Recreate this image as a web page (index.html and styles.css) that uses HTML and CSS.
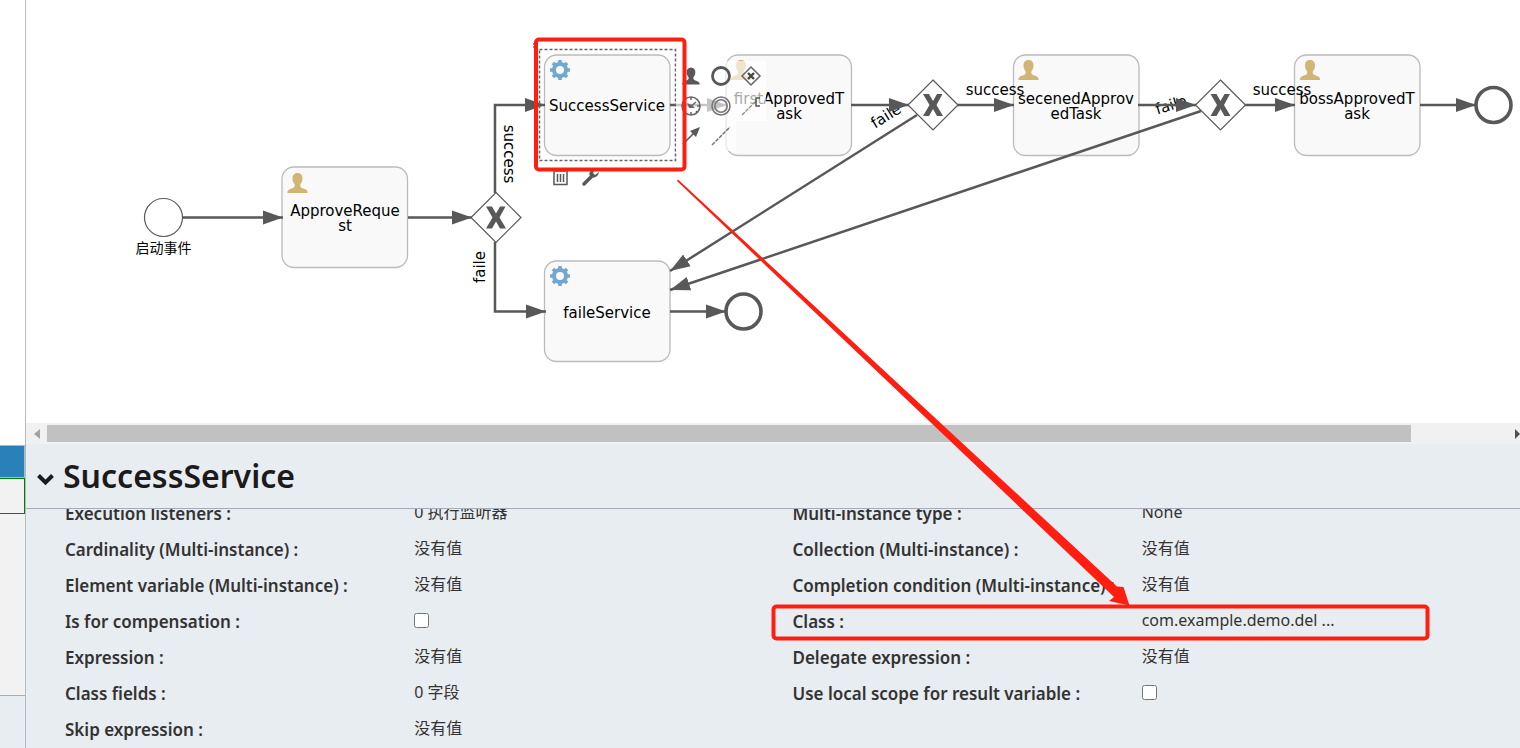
FILE: index.html
```html
<!DOCTYPE html>
<html lang="zh">
<head>
<meta charset="utf-8">
<title>SuccessService</title>
<link rel="stylesheet" href="styles.css">
</head>
<body>
<div class="app">
  <aside class="palette">
    <div class="palette-top"></div>
    <div class="palette-active"></div>
    <div class="palette-selected"></div>
    <div class="palette-rest"></div>
    <div class="palette-foot"></div>
  </aside>
  <main class="editor">
    <section class="canvas">
      <svg class="diagram" width="1494" height="423" viewBox="26 0 1494 423">
        <defs>
          <marker id="arrow" markerUnits="userSpaceOnUse" markerWidth="22" markerHeight="16" refX="20" refY="8" orient="auto"><path d="M0 1 20 8 0 15Z" fill="#585858"/></marker>
          <g id="user"><path d="M0-10C3.500-10 5.200-7.500 5-4.500 4.900-1.500 4-.5 2.800 1.500 2.400 4 3.500 4.700 6 5.500 9 6.500 10.200 7.500 10.200 10H-10.200C-10.200 7.500-9 6.500-6 5.500-3.500 4.700-2.400 4-2.800 1.500-4-.5-4.900-1.500-5-4.500-5.200-7.500-3.500-10 0-10Z"/></g>
          <g id="gear" fill="none" stroke="#72a7d0"><circle r="6" stroke-width="4"/><path stroke-width="3.600" d="M0-6.500V-10M0 6.500V10M-6.500 0H-10M6.500 0H10M-4.700-4.700-7.100-7.100M4.700-4.700 7.100-7.100M-4.700 4.700-7.100 7.100M4.700 4.700 7.100 7.100"/></g>
          <g id="gateway"><path d="M0-25 25 0 0 25-25 0Z" fill="#fff" stroke="#585858" stroke-width="1.200"/><path d="M-10-11H-4L0-4 4-11H9.500L3.500 0 10 11H4L0 4-4 11H-10L-3.500 0Z" fill="#585858"/></g>
          <rect id="task" width="125.500" height="100.500" rx="12"/>
        </defs>
        <g class="tasks">
          <use href="#task" x="282" y="167"/><use href="#task" x="544.500" y="55"/>
          <use href="#task" x="544.500" y="261"/><use href="#task" x="726" y="55"/>
          <use href="#task" x="1013.500" y="55"/><use href="#task" x="1294.500" y="55"/>
        </g>
        <g class="label">
          <text transform="translate(886 116) rotate(-32)" y="5">faile</text>
          <text transform="translate(1171 105) rotate(-17)" y="5">faile</text>
        </g>
        <g class="flow">
          <path d="M183 217.500H283"/><path d="M408 217.500H472"/>
          <path d="M495 193V105H545"/><path d="M495 242V311.500H546"/>
          <path d="M670 311.500H726"/><path d="M670 105H727"/>
          <path d="M851 105H909"/><path d="M957 105H1014"/>
          <path d="M1138 105H1196"/><path d="M1245 105H1295"/><path d="M1420 105H1476"/>
          <path d="M917 115 670 271"/><path d="M1201 111 670 290"/>
        </g>
        <use href="#gateway" x="496" y="217.500"/><use href="#gateway" x="933" y="105"/><use href="#gateway" x="1220.500" y="105"/>
        <circle class="event" cx="163.500" cy="217.500" r="19"/>
        <circle class="event end" cx="743.500" cy="311.500" r="17.500"/>
        <circle class="event end" cx="1493.500" cy="105" r="17.500"/>
        <g fill="#d1b575"><use href="#user" x="297.500" y="183"/><use href="#user" x="741" y="70"/><use href="#user" x="1028.500" y="70"/><use href="#user" x="1310" y="70"/></g>
        <use href="#gear" x="560" y="70"/><use href="#gear" x="560" y="276"/>
        <g class="label">
          <text class="event-name" x="163.500" y="253">启动事件</text>
          <text x="345" y="216">ApproveReque<tspan x="345" dy="15">st</tspan></text>
          <text x="607" y="111">SuccessService</text>
          <text x="607" y="318">faileService</text>
          <text x="789" y="104">firstApprovedT<tspan x="789" dy="15">ask</tspan></text>
          <text x="1076" y="104">secenedApprov<tspan x="1076" dy="15">edTask</tspan></text>
          <text x="1357" y="104">bossApprovedT<tspan x="1357" dy="15">ask</tspan></text>
          <text x="995" y="95">success</text><text x="1282" y="95">success</text>
          <text transform="translate(504 154) rotate(90)">success</text>
          <text transform="translate(485 267) rotate(-90)">faile</text>
        </g>
        <rect class="selection" x="539.500" y="49.500" width="136" height="111"/>
      </svg>
      <div class="context-pad">
        <button aria-label="User task"><svg viewBox="-15 -15 30 30"><use href="#user" transform="scale(.86)" fill="#585858"/></svg></button>
        <button aria-label="End event"><svg viewBox="-15 -15 30 30"><circle r="8.500" fill="none" stroke="#585858" stroke-width="2.800"/></svg></button>
        <button aria-label="Gateway"><svg viewBox="-15 -15 30 30"><path d="M0-9 9 0 0 9-9 0Z" fill="none" stroke="#666" stroke-width="1.500"/><path d="M-3-3 3 3M3-3-3 3" stroke="#444" stroke-width="2.400"/></svg></button>
        <button aria-label="Timer event"><svg viewBox="-15 -15 30 30"><circle r="9" fill="none" stroke="#666" stroke-width="1.600"/><path d="M5-4-1 1M0-9V-6M0 6V9M-9 0H-6M6 0H9M-6-6-5-5M6 6 5 5M-6 6-5 5" stroke="#666" stroke-width="1.500"/><path d="M-4-3-2 2 4 2 1-1Z" fill="#666"/></svg></button>
        <button aria-label="Intermediate event"><svg viewBox="-15 -15 30 30"><g fill="none" stroke="#777" stroke-width="1.600"><circle r="9"/><circle r="6.200"/></g></svg></button>
        <button aria-label="Text annotation"><svg viewBox="-15 -15 30 30"><path d="M-9 9 4-4" stroke="#888" stroke-width="1.300" stroke-dasharray="4 1"/><path d="M9-8H5V0H9" fill="none" stroke="#555" stroke-width="1.500"/></svg></button>
        <button aria-label="Sequence flow"><svg viewBox="-15 -15 30 30"><path d="M-8 8 5-5" stroke="#585858" stroke-width="1.600"/><path d="M9-9-1-5 5 1Z" fill="#585858"/></svg></button>
        <button aria-label="Association"><svg viewBox="-15 -15 30 30"><path d="M-9 9 9-9" stroke="#777" stroke-width="1.500" stroke-dasharray="4 1"/></svg></button>
      </div>
      <div class="element-tools">
        <button aria-label="Delete"><svg viewBox="-15 -15 30 30"><path d="M-6-5V7.500H7V-5M-7-6H8M-2.500-3V5M.5-3V5M3.500-3V5" fill="none" stroke="#585858" stroke-width="1.500"/></svg></button>
        <button aria-label="Change type"><svg viewBox="-15 -15 30 30"><path d="M-6 7 1 0" stroke="#585858" stroke-width="3.500" stroke-linecap="round"/><path d="M5-8C1-8-2-4 0-1 2 2 8 1 9-5L5-2 3-4Z" fill="#585858"/></svg></button>
      </div>
    </section>
    <div class="scrollbar">
      <svg width="7" height="10" viewBox="0 0 7 10"><path d="M6 0V10L0 5Z" fill="#a3a3a3"/></svg>
      <div class="track"><div class="thumb"></div></div>
      <svg width="5" height="10" viewBox="0 0 5 10"><path d="M0 0 5 5 0 10Z" fill="#505050"/></svg>
    </div>
    <header class="panel-head">
      <svg width="17" height="13" viewBox="0 0 17 13"><path d="M1.500 2.500 8.500 9.500 15.500 2.500" fill="none" stroke="#1b1b1b" stroke-width="4"/></svg>
      <h1>SuccessService</h1>
    </header>
    <section class="panel-body">
      <dl class="properties">
        <dt>Execution listeners :</dt><dd>0 执行监听器</dd>
        <dt>Multi-instance type :</dt><dd>None</dd>
        <dt>Cardinality (Multi-instance) :</dt><dd>没有值</dd>
        <dt>Collection (Multi-instance) :</dt><dd>没有值</dd>
        <dt>Element variable (Multi-instance) :</dt><dd>没有值</dd>
        <dt>Completion condition (Multi-instance) :</dt><dd>没有值</dd>
        <dt><label for="compensation">Is for compensation :</label></dt><dd><input type="checkbox" id="compensation"></dd>
        <dt>Class :</dt><dd>com.example.demo.del ...</dd>
        <dt>Expression :</dt><dd>没有值</dd>
        <dt>Delegate expression :</dt><dd>没有值</dd>
        <dt>Class fields :</dt><dd>0 字段</dd>
        <dt><label for="scope">Use local scope for result variable :</label></dt><dd><input type="checkbox" id="scope"></dd>
        <dt>Skip expression :</dt><dd>没有值</dd>
      </dl>
    </section>
  </main>
  <svg class="annotations" width="1520" height="748" viewBox="0 0 1520 748">
    <path d="M533 44H537M533 47H535" stroke="#4a6fb5" stroke-width="1.500"/>
    <rect x="536" y="39.500" width="148.500" height="130" rx="3"/>
    <rect x="773.500" y="606.500" width="654" height="32" rx="3"/>
    <path class="pointer" d="M678 179.500 1117 586.500 1123.500 587 1129.500 605.500 1109 601 1114 597 677 181Z"/>
  </svg>
</div>
</body>
</html>
```
FILE: styles.css
```css
* {
  box-sizing: border-box;
}

body {
  margin: 0;
  background: #fff;
  font-family: "Noto Sans", "Noto Sans CJK SC", sans-serif;
  color: #333;
}

.app {
  position: relative;
  display: flex;
  height: 100vh;
  overflow: hidden;
}

.palette {
  display: flex;
  flex-direction: column;
  width: 26px;
  flex: none;
  border-right: 1px solid #b4b9c2;
}

.palette-top {
  height: 445px;
}

.palette-active {
  height: 33px;
  border: solid #b5b5b5;
  border-width: 1px 1px 1px 0;
  background: #2a80b9;
}

.palette-selected {
  height: 36px;
  border: solid #008000;
  border-width: 1px 1px 1px 0;
  background: #f2f2f2;
}

.palette-rest {
  height: 182px;
  border-bottom: 1px solid #a4acb9;
  background: #f2f2f2;
}

.palette-foot {
  flex: 1;
  background: #e8edf1;
}

.editor {
  display: flex;
  flex-direction: column;
  flex: 1;
  min-width: 0;
}

.canvas {
  position: relative;
  height: 423px;
  overflow: hidden;
}

.diagram {
  display: block;
}

.tasks {
  fill: #f9f9f9;
  stroke: #bbb;
  stroke-width: 1.3;
}

.flow {
  fill: none;
  stroke: #585858;
  stroke-width: 2.5;
}

.flow path {
  marker-end: url(#arrow);
}

.event {
  fill: #fff;
  stroke: #585858;
  stroke-width: 1.2;
}

.end {
  stroke-width: 3.6;
}

.label {
  font-family: "DejaVu Sans", "Noto Sans CJK SC", sans-serif;
  font-size: 15px;
  text-anchor: middle;
  fill: #000;
}

.event-name {
  font-family: "Noto Sans CJK SC", sans-serif;
  font-size: 14px;
}

.selection {
  fill: none;
  stroke: #666;
  stroke-width: 1.5;
  stroke-dasharray: 3 2;
}

.context-pad,
.element-tools {
  position: absolute;
  display: grid;
  grid-template-columns: repeat(3, 30px);
  grid-auto-rows: 30px;
}

.context-pad {
  left: 650px;
  top: 61px;
}

.element-tools {
  left: 519px;
  top: 162px;
}

.canvas button {
  padding: 0;
  border: 0;
  background: rgba(255, 255, 255, .65);
}

.canvas button svg {
  display: block;
  width: 30px;
  height: 30px;
}

.scrollbar {
  display: flex;
  align-items: center;
  gap: 6px;
  height: 21px;
  padding-left: 8px;
  background: #f1f1f1;
}

.scrollbar svg {
  flex: none;
}

.track {
  flex: 1;
}

.thumb {
  width: 93.3%;
  height: 17px;
  background: #c1c1c1;
}

.panel-head {
  display: flex;
  align-items: center;
  gap: 9px;
  height: 65px;
  padding-left: 11px;
  border-bottom: 1px solid #a4acb9;
  background: #e8edf1;
}

.panel-head svg {
  margin-top: 6px;
}

h1 {
  margin: 0;
  font-size: 32px;
  font-weight: 600;
  line-height: 40px;
  color: #1b1b1b;
}

.panel-body {
  flex: 1;
  min-height: 0;
  overflow: hidden;
  background: #e8edf1;
}

.properties {
  display: grid;
  grid-template-columns: 24% 26% 24% 1fr;
  grid-auto-rows: 36px;
  margin: -13px 0 0;
  padding-left: 39px;
  font-size: 16px;
  line-height: 36px;
  white-space: nowrap;
}

dt {
  font-size: 17px;
  font-weight: 600;
}

dd {
  margin: 0;
  line-height: 32px;
}

dd input {
  display: block;
  width: 15px;
  height: 15px;
  margin: 9px 0 0;
}

.annotations {
  position: absolute;
  left: 0;
  top: 0;
  pointer-events: none;
}

.annotations rect {
  fill: none;
  stroke: #ff1e10;
  stroke-width: 4;
}

.pointer {
  fill: #ff1e10;
}
```
